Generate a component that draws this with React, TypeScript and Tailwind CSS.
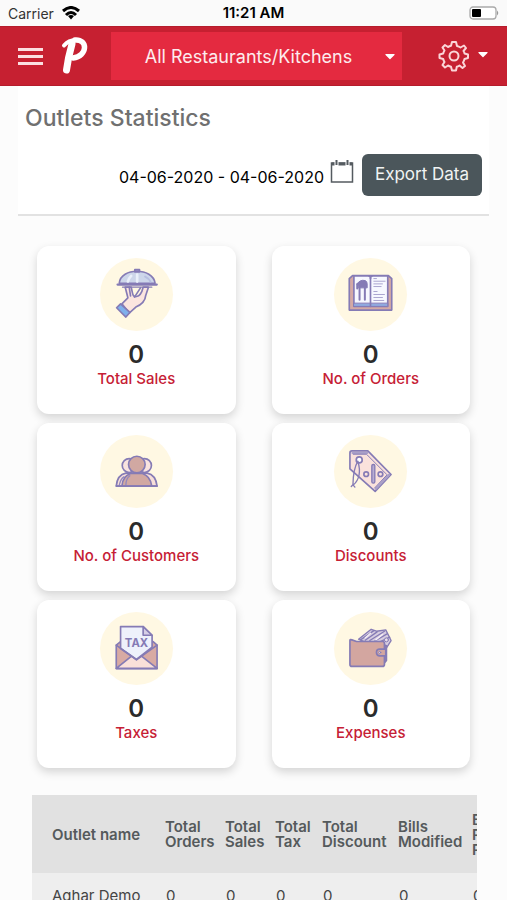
import React from 'react'
import { FaCaretDown } from 'react-icons/fa'

interface StatCardProps {
    title: string;
    value: number;
    children: React.ReactNode;
}

const StatCard: React.FC<StatCardProps> = ({
    title,
    value,
    children
}) => {
    return (
        <div className="bg-white rounded-xl h-[168px] pt-3 flex flex-col items-center shadow-[0_4px_10px_rgba(0,0,0,0.16)]">
            <div className="w-[73px] h-[73px] rounded-full bg-[#fff8e3]">
                <svg viewBox="30 22 220 220" className="w-full h-full" fill="none" stroke="#857bb5" strokeWidth="5" strokeLinecap="round" strokeLinejoin="round" aria-hidden="true">
                    {children}
                </svg>
            </div>
            <p className="mt-3 text-[24px] leading-6 font-semibold text-[#2b2b2b]">{value}</p>
            <p className="mt-1 text-[15px] leading-4 font-medium text-[#c62035]">{title}</p>
        </div>
    )
}

const SalesIcon = () => (
    <>
        <path d="M106 110 L114 142 L96 160 L118 188 L138 170 Q166 158 168 134 L176 110 L160 110 Q154 136 140 138 Q130 140 128 128 L124 110Z" fill="#fbe5df" />
        <path d="M118 110 L122 136 M152 112 L134 140" />
        <path d="M80 172 L92 160 L120 186 L108 200Z" fill="#7fb0ec" />
        <path d="M88 98 C92 50 190 50 196 98Z" fill="#cdd6ea" />
        <path d="M124 76 Q116 84 114 93 M142 72 V93" stroke="#eaf0fa" strokeWidth="8" />
        <path d="M166 78 Q178 84 182 93" stroke="#b7bfe0" strokeWidth="6" />
        <path d="M135 64 V57 H149 V64Z" fill="#9b93c6" />
        <path d="M83 102 H201" strokeWidth="7" />
        <path d="M98 110 H186" strokeWidth="4" />
    </>
)

const OrdersIcon = () => (
    <>
        <path d="M76 84 L86 75 H194 L204 84 V179 H76Z" fill="#d4a9a5" />
        <path d="M90 76 H132 Q140 76 140 83 Q140 76 148 76 H192 V168 H90Z" fill="#f7f8ff" />
        <path d="M90 158 H192 V168 H90Z" fill="#8fa9df" strokeWidth="3" />
        <path d="M140 83 V168" />
        <path d="M100 100 V114 M107 100 V148 M123 112 V148" strokeWidth="6" />
        <path d="M100 100 Q108 86 124 90 Q130 92 130 100 V112 H106Z" fill="#857bb5" strokeWidth="3" />
        <path d="M150 84 H158 M150 92 H184 M150 100 H176 M150 108 H172 M150 123 H160 M150 132 H182 M150 141 H176 M150 150 H180" stroke="#aaa5d0" strokeWidth="3" />
    </>
)

const CustomersIcon = () => (
    <>
        <path d="M79 176 Q82 142 108 137 H172 Q198 142 202 176Z" fill="#f7ded9" />
        <circle cx="118" cy="114" r="21" fill="#f9e3df" />
        <circle cx="164" cy="114" r="21" fill="#f9e3df" />
        <path d="M96 176 Q98 146 122 138 H158 Q182 146 186 176Z" fill="#d1a8a2" />
        <path d="M108 173 Q108 154 120 145 M88 174 Q92 154 102 148" stroke="#9388bd" strokeWidth="4" />
        <circle cx="141" cy="111" r="25" fill="#d1a8a2" />
        <path d="M79 176 H202" />
    </>
)

const DiscountsIcon = () => (
    <>
        <path d="M78 76 Q78 70 84 70 H132 L202 141 L154 192 L78 124Z" fill="#fae2dc" />
        <path d="M86 76 H130 M156 184 L196 142" stroke="#aaa0c8" strokeWidth="7" />
        <path d="M88 80 H128 L190 142 L152 182" strokeWidth="3" />
        <circle cx="106" cy="97" r="9" fill="#fff" />
        <circle cx="127" cy="140" r="7" />
        <circle cx="170" cy="140" r="7" />
        <rect x="144" y="111" width="9" height="56" rx="4" fill="#b8add2" strokeWidth="4" />
        <path d="M102 101 Q88 124 87 172 L82 177 M102 101 Q116 148 88 173 L93 179" strokeWidth="4" />
    </>
)

const TaxesIcon = () => (
    <>
        <path d="M79 122 L92 111 H190 L202 122 V193 H79Z" fill="#d8aaa3" />
        <path d="M79 192 L126 154 H154 L202 192Z" fill="#fae0d9" />
        <path d="M92 66 H160 L187 92 V128 L140 165 L92 132Z" fill="#eef1fb" />
        <path d="M160 66 V92 H187Z" fill="#d6cfe6" />
        <path d="M79 122 L140 166 L202 122" />
        <text x="140" y="129" textAnchor="middle" fontSize="34" fontWeight="700" fill="#857bb5" stroke="none">TAX</text>
    </>
)

const ExpensesIcon = () => (
    <>
        <path d="M104 104 L142 74 L158 80 L186 76 L202 108 L182 140Z" fill="#d7cde0" strokeWidth="4" />
        <path d="M110 106 L150 78 M124 107 L160 82 M138 108 L182 80 M152 110 L190 88 M168 112 L198 98" strokeWidth="4" />
        <path d="M140 86 L124 100 M176 90 L156 106" stroke="#f6eff6" strokeWidth="4" />
        <circle cx="188" cy="106" r="6" fill="#eadfe9" strokeWidth="3" />
        <path d="M178 120 L188 124 V168 L178 180Z" fill="#8d80b8" />
        <path d="M78 107 Q78 104 84 106 L98 111 H176 Q182 111 182 117 V180 Q182 186 176 186 H84 Q78 186 78 180Z" fill="#d3a6a0" />
        <path d="M186 134 H168 Q158 134 158 144 Q158 154 168 154 H186Z" fill="#d3a6a0" />
        <circle cx="168" cy="144" r="3" fill="#fff" strokeWidth="3" />
    </>
)

const stats = [
    { title: 'Total Sales', value: 0, icon: <SalesIcon /> },
    { title: 'No. of Orders', value: 0, icon: <OrdersIcon /> },
    { title: 'No. of Customers', value: 0, icon: <CustomersIcon /> },
    { title: 'Discounts', value: 0, icon: <DiscountsIcon /> },
    { title: 'Taxes', value: 0, icon: <TaxesIcon /> },
    { title: 'Expenses', value: 0, icon: <ExpensesIcon /> },
]

const columns = ['Total Orders', 'Total Sales', 'Total Tax', 'Total Discount', 'Bills Modified', 'Bills Re- Printed']

const StatusBar = () => (
    <div className="h-[26px] shrink-0 px-2 grid grid-cols-3 items-center bg-[#fafafa] text-black">
        <div className="flex items-center gap-2 text-[14px] text-[#333]">
            Carrier
            <svg viewBox="0 0 18 14" className="w-[18px] h-[14px]" fill="none" stroke="#000" strokeWidth="3" aria-hidden="true">
                <path d="M1 5 Q9 -2 17 5" />
                <path d="M4 9 Q9 4 14 9" />
                <path d="M6 10 Q9 8 12 10 L9 13.5Z" fill="#000" stroke="none" />
            </svg>
        </div>
        <p className="text-center text-[15px] font-semibold">11:21 AM</p>
        <svg viewBox="0 0 30 14" className="w-[30px] h-[14px] justify-self-end" aria-hidden="true">
            <rect x="1" y="1" width="26" height="12" rx="3" fill="#fff" stroke="#aaa" strokeWidth="1.3" />
            <rect x="3" y="3" width="9" height="8" rx="1" fill="#000" />
            <path d="M28 4.5 Q30.5 7 28 9.5Z" fill="#999" />
        </svg>
    </div>
)

const Header = () => (
    <header className="h-[60px] shrink-0 pl-[18px] pr-4 flex items-center bg-[#c62031] border-y border-[#b51c2c]">
        <button type="button" aria-label="Menu" className="w-[25px] flex flex-col gap-1">
            <span className="h-[3px] bg-[#fbdfe1]" />
            <span className="h-[3px] bg-[#fbdfe1]" />
            <span className="h-[3px] bg-[#fbdfe1]" />
        </button>
        <a href="#" aria-label="Home" className="ml-[18px]">
            <svg viewBox="0 0 28 40" className="w-7 h-10" fill="none" stroke="#fff" strokeLinecap="round" strokeLinejoin="round" aria-hidden="true">
                <path d="M11 8 Q7 22 5.500 34" strokeWidth="7" />
                <path d="M3 9.500 Q8 3.500 16 4" strokeWidth="4" />
                <path d="M14 4 C27 3 27 20 12 22" strokeWidth="5.5" />
            </svg>
        </a>
        <div className="relative ml-[22px] flex-1">
            <select aria-label="Outlet" className="w-full h-12 pr-4 appearance-none text-center text-[18px] text-[#fdecee] bg-[#e42a40]">
                <option>All Restaurants/Kitchens</option>
            </select>
            <FaCaretDown className="absolute right-1 top-4 size-4 text-white pointer-events-none" />
        </div>
        <button type="button" aria-label="Settings" className="ml-9 flex items-center gap-[5px]">
            <svg viewBox="0 0 32 32" className="size-8" fill="none" stroke="#fbd5d8" strokeWidth="2" strokeLinejoin="round" aria-hidden="true">
                <path d="M14 2 H18 L19 6 Q21 6.500 22.500 7.500 L26 5.500 L28 8 L25.500 11 Q26.500 12.500 26.500 13.500 L30 14.500 V18 L26.500 19 Q26 21 25 22.500 L27 26 L24.500 28 L21.500 25.500 Q20 26.500 18.800 26.800 L18 30.500 H14 L13 26.800 Q11.500 26.300 10 25.500 L7 27.500 L4.500 25 L6.500 22 Q5.500 20.500 5.200 19 L1.500 18 V14.500 L5.200 13.500 Q5.500 12 6.500 10.500 L4.500 7.500 L7 5 L10 7 Q11.500 6.200 13 5.800Z" />
                <circle cx="16" cy="16" r="4.500" />
            </svg>
            <FaCaretDown className="size-4 mb-1 text-white" />
        </button>
    </header>
)

const OutletTable = () => (
    <div className="ml-8 mr-[30px] mt-[27px] overflow-hidden">
        <table className="w-[530px] table-fixed text-left text-[15px] text-[#555a5c]">
            <colgroup>
                <col className="w-[128px]" />
                <col className="w-[60px]" />
                <col className="w-[50px]" />
                <col className="w-[47px]" />
                <col className="w-[76px]" />
                <col className="w-[74px]" />
                <col />
            </colgroup>
            <thead>
                <tr className="h-[78px] bg-[#e1e1e1] leading-[15px]">
                    <th scope="col" className="pl-5 font-semibold whitespace-nowrap">Outlet name</th>
                    {columns.map((column) => (
                        <th key={column} scope="col" className="pl-[5px] font-semibold">
                            {column.split(' ').map((word) => (
                                <span key={word} className="block">{word}</span>
                            ))}
                        </th>
                    ))}
                </tr>
            </thead>
            <tbody>
                <tr className="h-[46px] bg-[#eee] text-[#444]">
                    <td className="pl-5 whitespace-nowrap">Aghar Demo</td>
                    {columns.map((column) => (
                        <td key={column} className="pl-[6px]">0</td>
                    ))}
                </tr>
            </tbody>
        </table>
    </div>
)

const App: React.FC = () => {
    return (
        <div className="h-screen flex flex-col bg-[#fcfcfc] font-['Inter',sans-serif]">
            <StatusBar />
            <Header />
            <main className="flex-1 overflow-y-auto [scrollbar-width:none]">
                <section className="mx-[18px] px-[7px] pt-4 pb-[18px] bg-white border-b-2 border-[#e2e2e2]">
                    <h1 className="text-[23px] leading-8 font-medium text-[#707070]">Outlets Statistics</h1>
                    <div className="mt-5 flex items-center justify-end">
                        <input aria-label="Date range" type="text" readOnly defaultValue="04-06-2020 - 04-06-2020" className="w-[210px] h-10 pt-1 text-right text-[16px] text-black bg-transparent" />
                        <button type="button" aria-label="Pick dates" className="ml-[6px] mb-2">
                            <svg viewBox="0 0 24 24" className="size-6" fill="none" stroke="#555b60" strokeWidth="1.5" aria-hidden="true">
                                <path d="M1.500 4 H22.500 V23 H1.500Z" />
                                <path d="M2 5 H22" strokeWidth="3" />
                                <path d="M6.500 1 V7 M17.500 1 V7" stroke="#fff" strokeWidth="4" />
                                <path d="M6.500 1 V6 M17.500 1 V6" strokeWidth="2" />
                            </svg>
                        </button>
                        <button type="button" className="ml-2 h-[42px] w-[120px] rounded-md bg-[#4b565b] text-[17px] text-[#f1f3f3]">Export Data</button>
                    </div>
                </section>
                <section className="mt-[30px] mx-[37px] grid grid-cols-2 gap-x-9 gap-y-[9px]">
                    {stats.map((stat) => (
                        <StatCard key={stat.title} title={stat.title} value={stat.value}>
                            {stat.icon}
                        </StatCard>
                    ))}
                </section>
                <OutletTable />
            </main>
        </div>
    )
}

export default App
